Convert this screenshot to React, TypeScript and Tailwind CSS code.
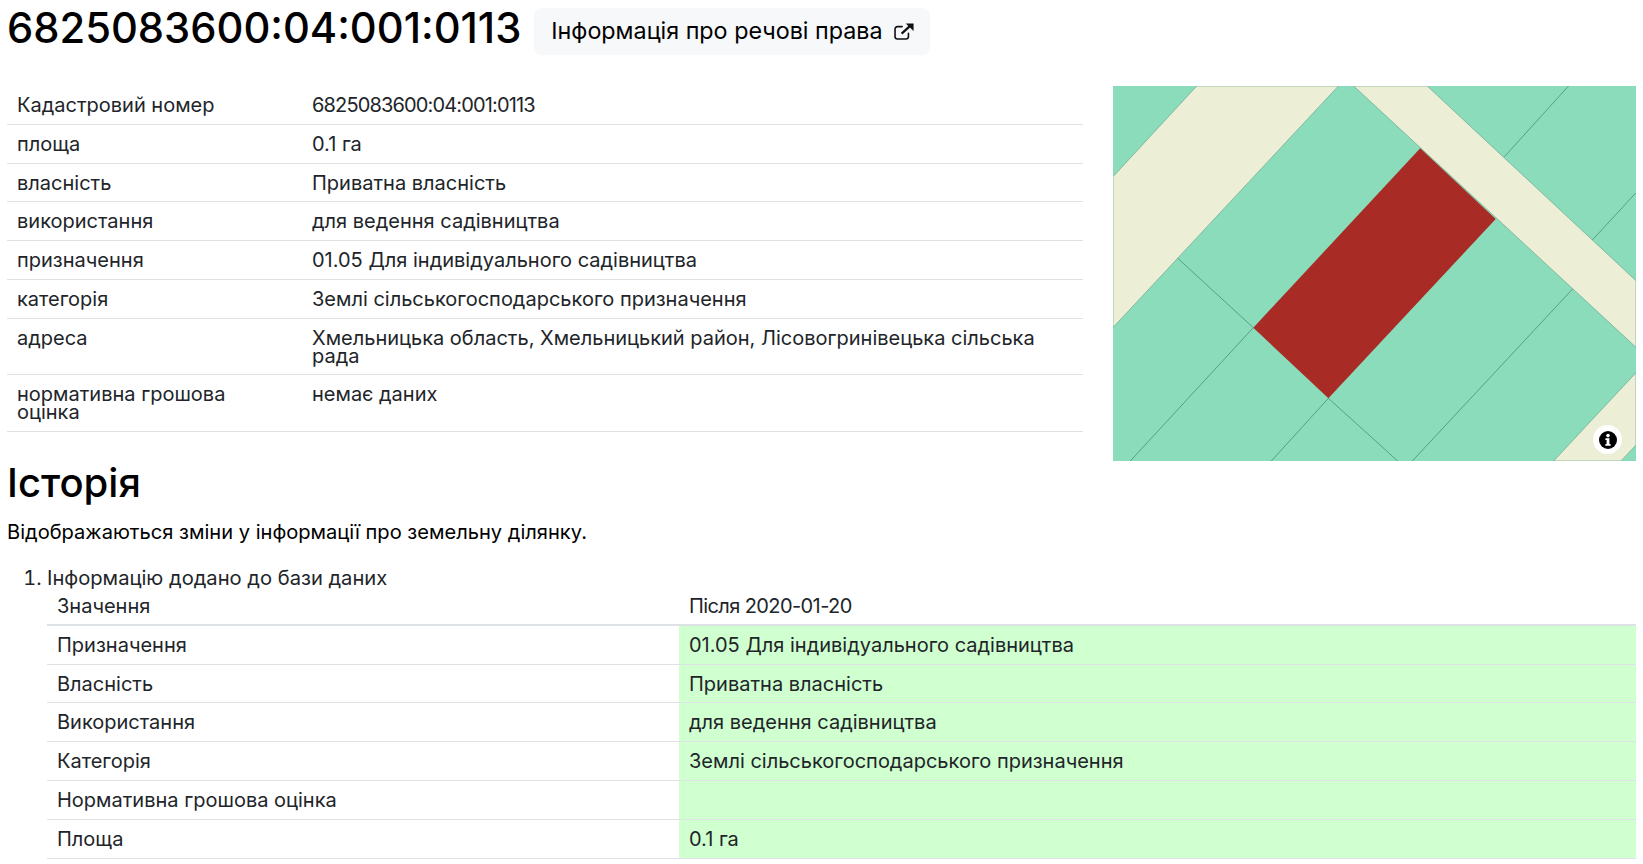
const details = [
    ['Кадастровий номер', '6825083600:04:001:0113'],
    ['площа', '0.1 га'],
    ['власність', 'Приватна власність'],
    ['використання', 'для ведення садівництва'],
    ['призначення', '01.05 Для індивідуального садівництва'],
    ['категорія', 'Землі сільськогосподарського призначення'],
    ['адреса', 'Хмельницька область, Хмельницький район, Лісовогринівецька сільська рада'],
    ['нормативна грошова оцінка', 'немає даних'],
];

const changes = [
    ['Призначення', '01.05 Для індивідуального садівництва'],
    ['Власність', 'Приватна власність'],
    ['Використання', 'для ведення садівництва'],
    ['Категорія', 'Землі сільськогосподарського призначення'],
    ['Нормативна грошова оцінка', ''],
    ['Площа', '0.1 га'],
];

function ExternalIcon() {
    return (
        <svg viewBox="0 0 21 18" className="w-[20px] h-[17px] shrink-0">
            <path
                d="M8.5 3.8H3.6A2.6 2.6 0 0 0 1 6.4v8A2.6 2.6 0 0 0 3.6 17h9a2.6 2.6 0 0 0 2.6-2.6V11"
                fill="none"
                stroke="#111"
                strokeWidth="1.7"
                strokeLinecap="round"
            />
            <path d="M8 11.2 17 3" fill="none" stroke="#111" strokeWidth="2.4" />
            <polygon points="12.4,0.6 20.6,0.6 20.6,8.4" fill="#111" />
        </svg>
    );
}

function ParcelMap() {
    return (
        <div className="relative w-[523px] h-[375px] shrink-0 bg-[#8bdcbb] overflow-hidden">
            <svg viewBox="0 0 523 375" className="block w-full h-full">
                <g fill="#edeed6" stroke="#5f9f8a" strokeWidth="0.6">
                    <polygon points="83.8,0 225.4,0 0,241.5 0,90.7" />
                    <polygon points="240.7,0 314.2,0 523,194.7 523,261.3" />
                    <polygon points="523,286.7 523,359 508,375 440.6,375" />
                </g>
                <polygon points="307.2,62.3 382.7,133 215.4,312.3 140.3,241.7" fill="#a92b25" />
                <g stroke="#3f8570" strokeWidth="0.7" fill="none">
                    <line x1="455.5" y1="0" x2="391.4" y2="70.7" />
                    <line x1="523" y1="106.7" x2="479.4" y2="154" />
                    <line x1="459.6" y1="203" x2="299.3" y2="375" />
                    <line x1="64.8" y1="172.3" x2="140.3" y2="241.7" />
                    <line x1="140.3" y1="241.7" x2="17.3" y2="375" />
                    <line x1="215.4" y1="312.3" x2="158.3" y2="375" />
                    <line x1="215.4" y1="312.3" x2="284.7" y2="375" />
                </g>
            </svg>
            <button className="absolute right-[14px] bottom-[7px] w-[29px] h-[29px] rounded-full bg-white flex items-center justify-center">
                <svg viewBox="0 0 20 20" className="w-[20px] h-[20px]">
                    <circle cx="10" cy="10" r="9" fill="#000" />
                    <circle cx="10" cy="5.6" r="1.8" fill="#fff" />
                    <path d="M7.4 8.3h4v5.7h1.2v1.7H7.4V14h1.2v-4H7.4z" fill="#fff" />
                </svg>
            </button>
        </div>
    );
}

export default function App() {
    return (
        <div className="h-screen overflow-hidden bg-white px-[7px] font-['Inter',sans-serif] text-[20px] text-[#212529]">
            {/* Title */}
            <div className="flex items-center gap-[13px] pt-[8px]">
                <h1 className="text-[41.7px] font-medium leading-[47px] -mt-[6px] text-black">6825083600:04:001:0113</h1>
                <a className="flex items-center gap-[11px] h-[47px] pl-[17px] pr-[16px] rounded-[8px] bg-[#f7f8fa] text-[23.3px] text-black">
                    Інформація про речові права
                    <ExternalIcon />
                </a>
            </div>

            {/* Details + map */}
            <div className="flex gap-[30px] mt-[31px]">
                <div className="flex-1">
                    <table className="w-full table-fixed border-collapse leading-[17.8px]">
                        <tbody>
                            {details.map(([label, value], i) => (
                                <tr key={label} className="border-b border-[#dee2e6]">
                                    <td className="w-[305px] pt-[11px] pb-[9px] pl-[10px] pr-[60px] align-top">{label}</td>
                                    <td className={i === 0 ? 'pt-[11px] pb-[9px] pr-[10px] align-top tracking-[-0.85px]' : 'pt-[11px] pb-[9px] pr-[10px] align-top'}>{value}</td>
                                </tr>
                            ))}
                        </tbody>
                    </table>
                    <h2 className="text-[40px] font-medium leading-[48px] mt-[27px] text-black">Історія</h2>
                </div>
                <ParcelMap />
            </div>

            {/* History */}
            <p className="mt-[13px] text-[20.1px] leading-[24px] text-black">Відображаються зміни у інформації про земельну ділянку.</p>
            <ol className="mt-[22px] list-decimal pl-[40px]">
                <li className="leading-[24px]">
                    <span className="text-[20.15px]">Інформацію додано до бази даних</span>
                    <table className="w-full table-fixed border-collapse leading-[17.8px]">
                        <thead>
                            <tr className="border-b-2 border-[#dee2e6]">
                                <td className="w-[632px] px-[10px] py-[8px]">Значення</td>
                                <td className="px-[10px] py-[8px] tracking-[-0.6px]">Після 2020-01-20</td>
                            </tr>
                        </thead>
                        <tbody>
                            {changes.map(([label, value]) => (
                                <tr key={label} className="border-b border-[#dee2e6]">
                                    <td className="px-[10px] pt-[11px] pb-[9px]">{label}</td>
                                    <td className="px-[10px] pt-[11px] pb-[9px] bg-[#d0ffd0]">{value}</td>
                                </tr>
                            ))}
                        </tbody>
                    </table>
                </li>
            </ol>
        </div>
    );
}
